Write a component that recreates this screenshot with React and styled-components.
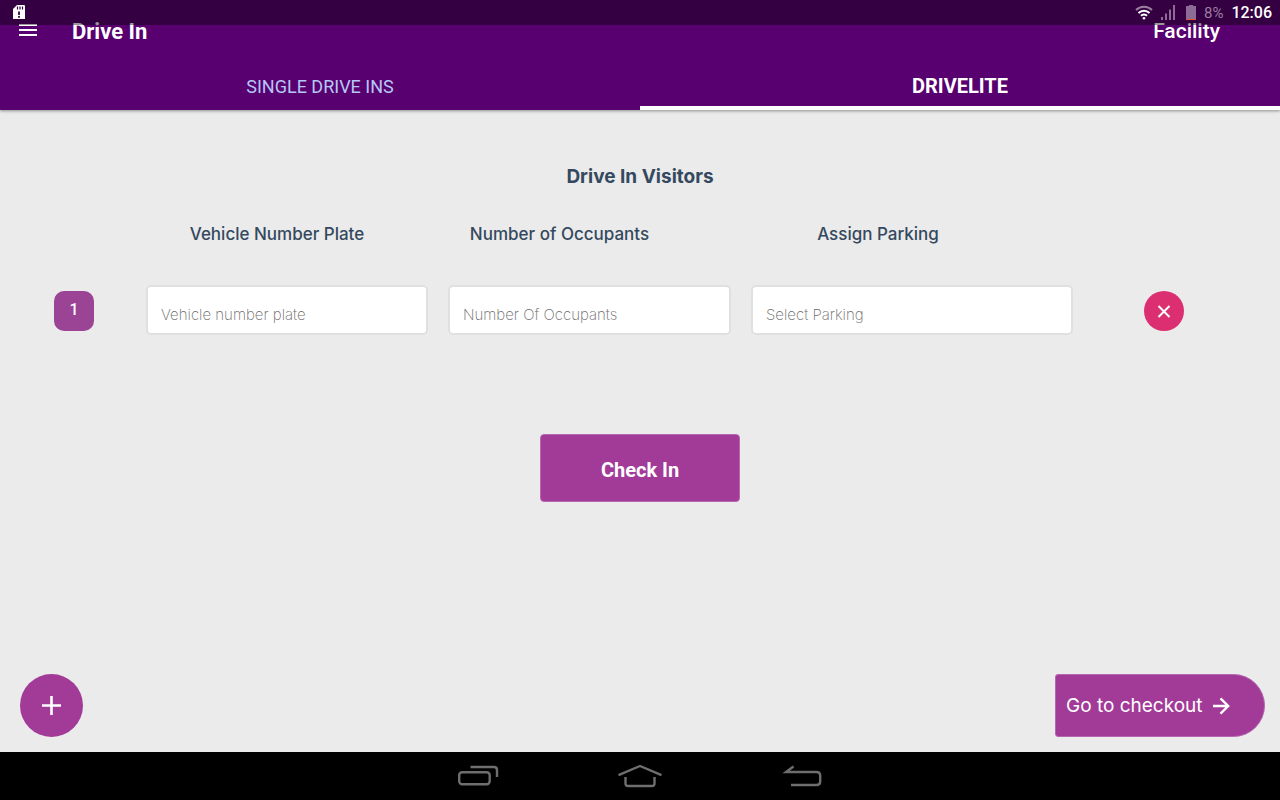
import React from "react";
import styled, { createGlobalStyle } from "styled-components";

const GlobalStyle = createGlobalStyle`
  * {
    box-sizing: border-box;
  }
  body {
    margin: 0;
    background: #ebebeb;
    font-family: Roboto, sans-serif;
  }
  button {
    border: none;
    padding: 0;
    background: none;
    color: inherit;
    font-family: inherit;
    cursor: pointer;
  }
  svg {
    display: block;
  }
`;

const Page = styled.div`
  display: flex;
  flex-direction: column;
  min-height: 100vh;
`;

const StatusBar = styled.div`
  position: absolute;
  top: 0;
  left: 0;
  right: 0;
  display: flex;
  align-items: center;
  justify-content: space-between;
  height: 25px;
  padding: 0 8px 0 12px;
  background: rgba(0, 0, 0, 0.4);
  color: #fff;
`;

const StatusGroup = styled.div`
  display: flex;
  align-items: center;
  gap: 8px;
`;

const Percent = styled.span`
  font-size: 15px;
  font-weight: 400;
  color: #9a7fa0;
`;

const Clock = styled.span`
  font-size: 16px;
  font-weight: 500;
`;

const Header = styled.header`
  background: #58006f;
  color: #fff;
  box-shadow: 0 1px 3px rgba(0, 0, 0, 0.4);
`;

const Toolbar = styled.div`
  display: flex;
  align-items: center;
  height: 62px;
  padding: 0 60px 0 16px;
`;

const Title = styled.h1`
  flex: 1;
  margin: 0 0 0 32px;
  font-size: 22px;
  font-weight: 700;
`;

const Facility = styled.span`
  font-size: 21px;
  font-weight: 500;
`;

const Tabs = styled.div`
  display: flex;
  height: 48px;
`;

const Tab = styled.button`
  flex: 1;
  padding-top: 4px;
  border-bottom: 4px solid ${({ $active }) => ($active ? "#fff" : "transparent")};
  color: ${({ $active }) => ($active ? "#fff" : "#b5c7f5")};
  font-size: ${({ $active }) => ($active ? "20px" : "18px")};
  font-weight: ${({ $active }) => ($active ? 700 : 400)};
`;

const Content = styled.main`
  flex: 1;
  display: flex;
  flex-direction: column;
  color: #34495e;
`;

const Heading = styled.h2`
  margin: 54px 0 0;
  text-align: center;
  font-family: Inter, sans-serif;
  font-size: 19px;
  line-height: 26px;
  font-weight: 700;
`;

const Labels = styled.div`
  display: grid;
  grid-template-columns: 282fr 283fr 354fr;
  margin: 32px 225px 0 136px;
`;

const Label = styled.label`
  text-align: center;
  font-family: Inter, sans-serif;
  font-size: 17px;
  line-height: 24px;
  font-weight: 500;
`;

const Row = styled.div`
  display: flex;
  align-items: flex-end;
  margin-top: 39px;
  padding: 0 96px 0 54px;
`;

const Badge = styled.span`
  width: 40px;
  height: 40px;
  margin-bottom: 4px;
  border-radius: 10px;
  background: #9b4394;
  color: #fff;
  font-size: 16px;
  line-height: 38px;
  font-weight: 500;
  text-align: center;
`;

const Fields = styled.div`
  flex: 1;
  display: grid;
  grid-template-columns: 282fr 283fr 322fr;
  gap: 20px;
  margin: 0 71px 0 52px;
`;

const Input = styled.input`
  width: 100%;
  min-width: 0;
  height: 50px;
  padding: 8px 13px 0;
  border: 2px solid #e0e0e0;
  border-radius: 5px;
  background: #fff;
  color: #6c6c6c;
  font-family: Inter, sans-serif;
  font-size: 15px;
  font-weight: 200;
  appearance: none;
  outline: none;
  &::placeholder {
    color: #6c6c6c;
    opacity: 1;
  }
`;

const RemoveButton = styled.button`
  display: flex;
  align-items: center;
  justify-content: center;
  width: 40px;
  height: 40px;
  margin-bottom: 4px;
  border-radius: 50%;
  background: #dc2f72;
  color: #fff;
`;

const CheckIn = styled.button`
  align-self: center;
  width: 200px;
  height: 68px;
  margin-top: 99px;
  padding-top: 4px;
  border: 1px solid #b767af;
  border-radius: 4px;
  background: #a23b98;
  color: #fff;
  font-size: 20px;
  font-weight: 700;
`;

const Actions = styled.div`
  display: flex;
  justify-content: space-between;
  margin-top: auto;
  padding: 15px 15px 15px 20px;
`;

const AddButton = styled.button`
  display: flex;
  align-items: center;
  justify-content: center;
  width: 63px;
  height: 63px;
  border-radius: 50%;
  background: #a23b98;
  color: #fff;
`;

const CheckoutButton = styled.button`
  display: flex;
  align-items: center;
  gap: 9px;
  width: 210px;
  height: 63px;
  padding-left: 10px;
  border: 1px solid #b767af;
  border-radius: 3px 32px 32px 3px;
  background: #a23b98;
  color: #fff;
  font-family: Inter, sans-serif;
  font-size: 19px;
  font-weight: 400;
  white-space: nowrap;
`;

const NavBar = styled.nav`
  display: flex;
  align-items: center;
  justify-content: center;
  gap: 117px;
  height: 48px;
  background: #000;
  color: #6e6e6e;
`;

const SdIcon = () => (
  <svg width="14" height="15" viewBox="0 0 14 15">
    <path d="M5 0h7a1 1 0 0 1 1 1v13H1V4z" fill="#fff" />
    <path d="M5.500 1.500v3M8 1.500v3M10.500 1.500v3" stroke="#34003f" strokeWidth="1.200" />
    <path d="M7 6.500v3.500M7 11v1.800" stroke="#34003f" strokeWidth="1.800" />
  </svg>
);

const WifiIcon = () => (
  <svg width="18" height="15" viewBox="0 0 18 15" fill="none" strokeWidth="2">
    <path d="M1 5a11.500 11.500 0 0 1 16 0" stroke="#9a7fa0" />
    <path d="M3.500 8a7.800 7.800 0 0 1 11 0M6 10.800a4.300 4.300 0 0 1 6 0" stroke="#fff" />
    <circle cx="9" cy="13.200" r="1.300" fill="#fff" />
  </svg>
);

const SignalIcon = () => (
  <svg width="17" height="15" viewBox="0 0 17 15" fill="#8c6b94">
    <path d="M0 12h2v3H0zM4 8.500h2V15H4zM8 4.500h2V15H8zM12 0h2v15h-2z" />
  </svg>
);

const BatteryIcon = () => (
  <svg width="10" height="15" viewBox="0 0 10 15">
    <path d="M3 0h4v1h3v14H0V1h3z" fill="#8c6b94" />
    <path d="M0 14h10v1H0z" fill="#e0552d" />
  </svg>
);

const MenuIcon = () => (
  <svg width="24" height="24" viewBox="0 0 24 24" fill="currentColor">
    <path d="M3 5h18v2H3zM3 10h18v2H3zM3 15h18v2H3z" />
  </svg>
);

const CloseIcon = () => (
  <svg width="20" height="20" viewBox="0 0 20 20" stroke="currentColor" strokeWidth="2">
    <path d="M4.500 5l11 11M15.500 5l-11 11" />
  </svg>
);

const PlusIcon = () => (
  <svg width="21" height="21" viewBox="0 0 21 21" stroke="currentColor" strokeWidth="2.600">
    <path d="M10.500 1v19M1 10.500h19" />
  </svg>
);

const ArrowIcon = () => (
  <svg width="18" height="18" viewBox="0 0 18 18" fill="none" stroke="currentColor" strokeWidth="2.400">
    <path d="M1 9h15M8.500 1.300L16.200 9l-7.700 7.700" />
  </svg>
);

const RecentIcon = () => (
  <svg width="42" height="24" viewBox="0 0 42 24" fill="none" stroke="currentColor" strokeWidth="2.400">
    <rect x="1.200" y="8.200" width="30.500" height="12" rx="3" />
    <path d="M12.500 3H36q3 0 3 3v7" />
  </svg>
);

const HomeIcon = () => (
  <svg width="46" height="24" viewBox="0 0 46 24" fill="none" stroke="currentColor" strokeWidth="2.400">
    <path d="M1.500 11.200L23 2l21.500 9.200" />
    <path d="M8.500 13v6.500q0 2.500 2.500 2.500h24q2.500 0 2.500-2.500V13" />
  </svg>
);

const BackIcon = () => (
  <svg width="42" height="24" viewBox="0 0 42 24" fill="none" stroke="currentColor" strokeWidth="2.400">
    <path d="M13.500 2.500L6 8h30.500q3.700 0 3.700 3.500v6q0 3.500-3.700 3.500H11" />
  </svg>
);

const App = () => {
  return (
    <Page>
      <GlobalStyle />
      <Header>
        <Toolbar>
          <button aria-label="Menu">
            <MenuIcon />
          </button>
          <Title>Drive In</Title>
          <Facility>Facility</Facility>
        </Toolbar>
        <Tabs role="tablist">
          <Tab role="tab" aria-selected="false">
            SINGLE DRIVE INS
          </Tab>
          <Tab role="tab" aria-selected="true" $active>
            DRIVELITE
          </Tab>
        </Tabs>
      </Header>
      <StatusBar>
        <SdIcon />
        <StatusGroup>
          <WifiIcon />
          <SignalIcon />
          <BatteryIcon />
          <Percent>8%</Percent>
          <Clock>12:06</Clock>
        </StatusGroup>
      </StatusBar>
      <Content>
        <Heading>Drive In Visitors</Heading>
        <Labels>
          <Label htmlFor="plate">Vehicle Number Plate</Label>
          <Label htmlFor="occupants">Number of Occupants</Label>
          <Label htmlFor="parking">Assign Parking</Label>
        </Labels>
        <Row>
          <Badge>1</Badge>
          <Fields>
            <Input id="plate" placeholder="Vehicle number plate" />
            <Input id="occupants" placeholder="Number Of Occupants" />
            <Input as="select" id="parking" defaultValue="">
              <option value="">Select Parking</option>
            </Input>
          </Fields>
          <RemoveButton aria-label="Remove">
            <CloseIcon />
          </RemoveButton>
        </Row>
        <CheckIn>Check In</CheckIn>
        <Actions>
          <AddButton aria-label="Add vehicle">
            <PlusIcon />
          </AddButton>
          <CheckoutButton>
            Go to checkout
            <ArrowIcon />
          </CheckoutButton>
        </Actions>
      </Content>
      <NavBar>
        <button aria-label="Recent apps">
          <RecentIcon />
        </button>
        <button aria-label="Home">
          <HomeIcon />
        </button>
        <button aria-label="Back">
          <BackIcon />
        </button>
      </NavBar>
    </Page>
  );
};

export default App;
